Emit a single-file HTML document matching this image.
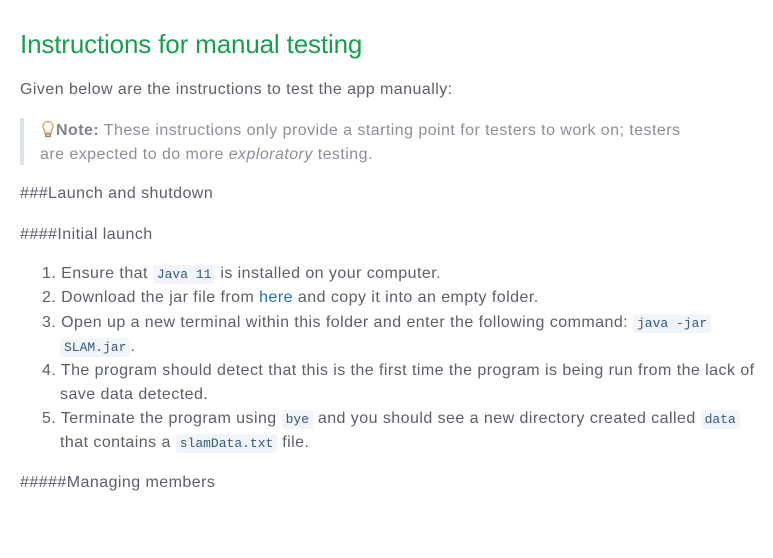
<!DOCTYPE html>
<html><head><meta charset="utf-8"><style>
body{margin:0;background:#fff;font-family:"Liberation Sans",sans-serif;color:#5a6169;font-size:16px;letter-spacing:0.45px;}
.wrap{position:relative;width:773px;height:558px;}
.l{position:absolute;white-space:nowrap;line-height:24px;}
h1{position:absolute;left:20px;top:27px;margin:0;font-weight:normal;font-size:26px;color:#1a9e4f;letter-spacing:-0.15px;white-space:nowrap;line-height:34px;}
code{font-family:"Liberation Mono",monospace;font-size:13px;background:#f1f5f9;color:#34587e;padding:2px 4px;border-radius:3px;letter-spacing:0;}
a{color:#1f6fb8;text-decoration:none;}
.bq{position:absolute;left:20px;top:118px;width:4px;height:47px;background:#dbe4ee;}
.q{color:#8a9096;}
</style></head><body><div class="wrap">
<h1>Instructions for manual testing</h1>
<div class="l" style="left:20px;top:78px;">Given below are the instructions to test the app manually:</div>
<div class="bq"></div>
<div class="l q" style="left:40px;top:119px;"><svg width="16" height="18" viewBox="0 0 16 18" style="vertical-align:-3px"><path d="M8 1.5a5 5 0 0 0-3 9v2.5h6v-2.5a5 5 0 0 0-3-9z" fill="none" stroke="#e0a060" stroke-width="1.4"/><path d="M5.5 14.5h5v2h-5z" fill="none" stroke="#888" stroke-width="1.2"/></svg><b style="color:#7d848b">Note:</b> These instructions only provide a starting point for testers to work on; testers</div>
<div class="l q" style="left:40px;top:143px;">are expected to do more <i>exploratory</i> testing.</div>
<div class="l" style="left:20px;top:182px;">###Launch and shutdown</div>
<div class="l" style="left:20px;top:223px;">####Initial launch</div>
<div class="l" style="left:42px;top:262px;">1. Ensure that <code>Java 11</code> is installed on your computer.</div>
<div class="l" style="left:42px;top:286px;">2. Download the jar file from <a>here</a> and copy it into an empty folder.</div>
<div class="l" style="left:42px;top:311px;">3. Open up a new terminal within this folder and enter the following command: <code>java -jar</code></div>
<div class="l" style="left:60px;top:335px;"><code>SLAM.jar</code>.</div>
<div class="l" style="left:42px;top:359px;">4. The program should detect that this is the first time the program is being run from the lack of</div>
<div class="l" style="left:60px;top:383px;">save data detected.</div>
<div class="l" style="left:42px;top:407px;">5. Terminate the program using <code>bye</code> and you should see a new directory created called <code>data</code></div>
<div class="l" style="left:60px;top:431px;">that contains a <code>slamData.txt</code> file.</div>
<div class="l" style="left:20px;top:471px;">#####Managing members</div>
</div></body></html>
